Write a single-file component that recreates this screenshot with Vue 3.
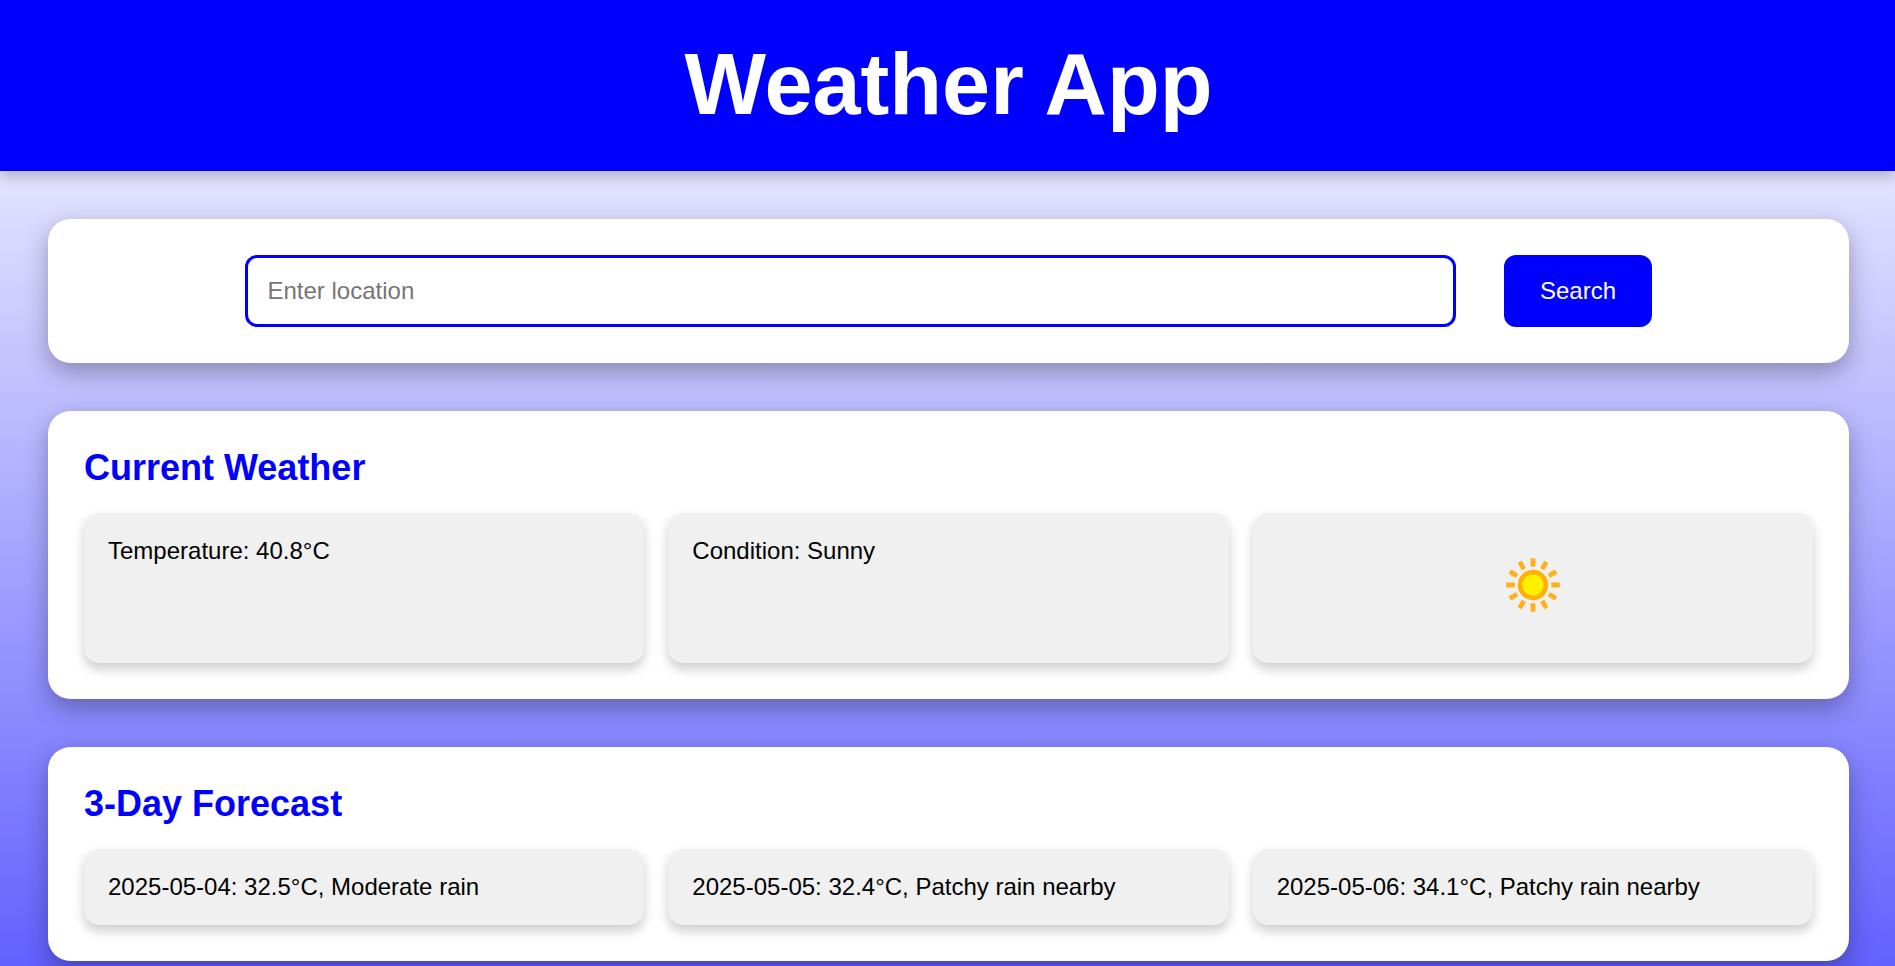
<script setup>
const conditions = ['Temperature: 40.8°C', 'Condition: Sunny']
const forecast = [
  '2025-05-04: 32.5°C, Moderate rain',
  '2025-05-05: 32.4°C, Patchy rain nearby',
  '2025-05-06: 34.1°C, Patchy rain nearby',
]
const rays = Array.from({ length: 12 }, (_, i) => i * 30)
</script>

<template>
  <div class="page">
    <header class="header"><h1>Weather App</h1></header>
    <main class="content">
      <section class="card search">
        <input class="field" type="text" placeholder="Enter location" />
        <button class="button">Search</button>
      </section>
      <section class="card">
        <h2>Current Weather</h2>
        <div class="grid">
          <div v-for="c in conditions" :key="c" class="item">{{ c }}</div>
          <div class="item icon-item">
            <svg class="sun" viewBox="0 0 96 96">
              <rect
                v-for="a in rays"
                :key="a"
                x="45.6"
                y="21.2"
                width="4.8"
                height="8.5"
                rx="0.7"
                fill="#ffb01a"
                :transform="`rotate(${a} 48 48)`"
              />
              <circle cx="48" cy="48" r="12.9" fill="#fff000" stroke="#ffb000" stroke-width="4.6" />
            </svg>
          </div>
        </div>
      </section>
      <section class="card">
        <h2>3-Day Forecast</h2>
        <div class="grid">
          <div v-for="f in forecast" :key="f" class="item">{{ f }}</div>
        </div>
      </section>
    </main>
  </div>
</template>

<style>
body {
  margin: 0;
  overflow: hidden;
}
</style>

<style scoped>
* {
  box-sizing: border-box;
}
.page {
  height: 966px;
  overflow: hidden;
  font-family: "Liberation Sans", Arial, sans-serif;
  font-size: 24px;
  color: #000;
  background: linear-gradient(to bottom, #fff 0, #00f 1560px);
}
.header {
  height: 171px;
  padding: 35px 0 37px 2px;
  background: #00f;
  color: #fff;
  text-align: center;
  box-shadow: 0 6px 12px rgba(0, 0, 0, 0.2);
}
h1 {
  margin: 0;
  font-size: 86.4px;
  line-height: 99px;
}
.content {
  display: flex;
  flex-direction: column;
  gap: 48px;
  padding: 48px 46px 48px 48px;
}
.card {
  padding: 36px;
  border-radius: 22.5px;
  background: #fff;
  box-shadow: 0 9px 24px rgba(0, 0, 0, 0.3);
}
.search {
  display: flex;
  justify-content: center;
  gap: 48px;
}
.field {
  width: 1211px;
  height: 72px;
  padding: 0 19.5px;
  border: 3px solid #00f;
  border-radius: 12px;
  background: #fff;
  font: inherit;
  outline: none;
}
.field::placeholder {
  color: #757575;
}
.button {
  width: 148px;
  height: 72px;
  padding: 0;
  border: 0;
  border-radius: 12px;
  background: #00f;
  color: #fff;
  font: inherit;
}
h2 {
  margin: 0 0 24px;
  color: #00f;
  font-size: 36px;
  line-height: 42px;
}
.grid {
  display: grid;
  grid-template-columns: repeat(3, 1fr);
  gap: 24px;
}
.item {
  padding: 24px;
  border-radius: 15px;
  background: #f0f0f0;
  line-height: 28px;
  box-shadow: 0 6px 12px rgba(0, 0, 0, 0.2);
}
.icon-item {
  height: 150px;
  text-align: center;
}
.sun {
  display: block;
  width: 96px;
  height: 96px;
  margin: 0 auto;
}
</style>
